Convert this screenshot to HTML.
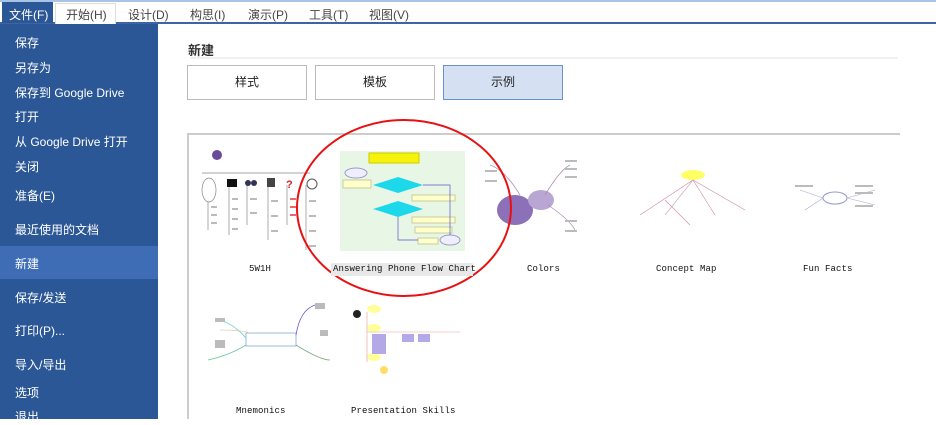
<!DOCTYPE html>
<html><head><meta charset="utf-8"><style>
*{margin:0;padding:0;box-sizing:border-box}
body{width:936px;height:419px;overflow:hidden;background:#fff;font-family:"Liberation Sans","Noto Sans CJK SC",sans-serif;position:relative}
.a{position:absolute}
.top{left:0;top:0;width:936px;height:2px;background:#a9c4e6}
.menu{left:0;top:2px;width:936px;height:22px;background:#fff;border-bottom:2px solid #3d64a6}
.mi{position:absolute;top:4px;font-size:12px;color:#444}
.side{left:0;top:24px;width:158px;height:395px;background:#2b5797}
.si{position:absolute;left:15px;font-size:12px;color:#fff}
.btn{position:absolute;top:65px;width:120px;height:35px;border:1px solid #bbb;background:#fff;font-size:12px;color:#222;text-align:center;line-height:33px}
.lbl{position:absolute;font-family:"Liberation Mono","Noto Sans CJK SC",monospace;font-size:9px;color:#111;letter-spacing:0.1px}
</style></head><body>
<div class="a top"></div>
<div class="a menu">
<div class="a" style="left:2px;top:0;width:51px;height:21px;background:#2b5797"></div>
<div class="mi" style="left:9px;color:#fff">文件(F)</div>
<div class="a" style="left:55px;top:1px;width:61px;height:21px;border:1px solid #ddd;border-bottom:none;background:#fff"></div>
<div class="mi" style="left:66px">开始(H)</div>
<div class="mi" style="left:128px">设计(D)</div>
<div class="mi" style="left:190px">构思(I)</div>
<div class="mi" style="left:248px">演示(P)</div>
<div class="mi" style="left:309px">工具(T)</div>
<div class="mi" style="left:369px">视图(V)</div>
</div>
<div class="a side">
<div class="si" style="top:10px">保存</div>
<div class="si" style="top:35px">另存为</div>
<div class="si" style="top:60px">保存到 Google Drive</div>
<div class="si" style="top:84px">打开</div>
<div class="si" style="top:109px">从 Google Drive 打开</div>
<div class="si" style="top:134px">关闭</div>
<div class="si" style="top:163px">准备(E)</div>
<div class="si" style="top:197px">最近使用的文档</div>
<div class="a" style="left:0;top:222px;width:158px;height:33px;background:#3e6db5"></div>
<div class="si" style="top:231px">新建</div>
<div class="si" style="top:265px">保存/发送</div>
<div class="si" style="top:298px">打印(P)...</div>
<div class="si" style="top:332px">导入/导出</div>
<div class="si" style="top:360px">选项</div>
<div class="si" style="top:384px">退出</div>
</div>
<div class="a" style="left:188px;top:40px;font-size:13px;color:#333;font-weight:bold">新建</div>
<div class="a" style="left:190px;top:57px;width:708px;height:2px;background:#f0f0f0"></div>
<div class="btn" style="left:187px">样式</div>
<div class="btn" style="left:315px">模板</div>
<div class="btn" style="left:443px;background:#d5e1f2;border-color:#6b90cf">示例</div>
<div class="a" style="left:187px;top:133px;width:713px;height:286px;border-top:2px solid #ccc;border-left:2px solid #ccc"></div>
<svg class="a" style="left:0;top:0" width="936" height="419">
<!-- 5W1H -->
<g stroke="#888" fill="none" stroke-width="0.7">
<line x1="202" y1="173" x2="310" y2="173"/>
<ellipse cx="209" cy="190" rx="7" ry="12"/>
<line x1="208" y1="202" x2="208" y2="230"/><line x1="229" y1="185" x2="229" y2="235"/><line x1="247" y1="185" x2="247" y2="225"/><line x1="268" y1="185" x2="268" y2="240"/><line x1="287" y1="185" x2="287" y2="225"/><line x1="306" y1="185" x2="306" y2="250"/>
</g>
<g fill="#bbb"><rect x="211" y="206" width="6" height="2"/><rect x="211" y="214" width="6" height="2"/><rect x="211" y="222" width="6" height="2"/><rect x="232" y="198" width="6" height="2"/><rect x="232" y="208" width="6" height="2"/><rect x="232" y="218" width="6" height="2"/><rect x="232" y="228" width="6" height="2"/><rect x="250" y="198" width="7" height="2"/><rect x="250" y="212" width="7" height="2"/><rect x="271" y="200" width="7" height="2"/><rect x="271" y="215" width="7" height="2"/><rect x="271" y="230" width="7" height="2"/><rect x="309" y="200" width="7" height="2"/><rect x="309" y="215" width="7" height="2"/><rect x="309" y="230" width="7" height="2"/><rect x="309" y="245" width="7" height="2"/></g>
<g fill="#e66"><rect x="290" y="198" width="6" height="2"/><rect x="290" y="206" width="6" height="2"/><rect x="290" y="214" width="6" height="2"/></g>
<circle cx="217" cy="155" r="5" fill="#6a4a9a"/><rect x="227" y="179" width="10" height="8" fill="#111"/><circle cx="248" cy="183" r="3" fill="#335"/><circle cx="254" cy="183" r="3" fill="#335"/><rect x="267" y="178" width="8" height="9" fill="#444"/><text x="286" y="188" fill="#d22" font-size="11" font-weight="bold">?</text><circle cx="312" cy="184" r="5" fill="none" stroke="#555"/>
<!-- flow -->
<rect x="340" y="138" width="127" height="122" fill="#fff"/>
<rect x="340" y="151" width="125" height="100" fill="#e8f6e6"/>
<rect x="369" y="153" width="50" height="10" fill="#f6f20a" stroke="#cc0"/>
<ellipse cx="356" cy="173" rx="11" ry="5" fill="#eef" stroke="#99c"/>
<rect x="343" y="180" width="28" height="8" fill="#ffc" stroke="#cc9"/>
<polygon points="373,185 398,177 423,185 398,193" fill="#1dd8ea"/>
<polygon points="373,209 398,201 423,209 398,217" fill="#1dd8ea"/>
<rect x="412" y="195" width="43" height="6" fill="#ffc" stroke="#cc9"/><rect x="412" y="217" width="43" height="6" fill="#ffc" stroke="#cc9"/><rect x="415" y="227" width="37" height="6" fill="#ffc" stroke="#cc9"/><rect x="418" y="238" width="20" height="6" fill="#ffc" stroke="#cc9"/>
<ellipse cx="450" cy="240" rx="10" ry="5" fill="#eef" stroke="#99c"/>
<path d="M398 217V240H418M423 185H450V235" stroke="#55c" fill="none" stroke-width="0.7"/>
<!-- colors -->
<ellipse cx="515" cy="210" rx="18" ry="15" fill="#8c70b8"/><ellipse cx="541" cy="200" rx="13" ry="10" fill="#b9a6d3"/>
<g stroke="#a8a" fill="none" stroke-width="0.7"><path d="M545 195Q560 170 570 165M548 205Q570 220 575 230M520 195Q505 170 490 165"/></g>
<g fill="#bbb"><rect x="565" y="160" width="12" height="2"/><rect x="565" y="168" width="12" height="2"/><rect x="565" y="176" width="12" height="2"/><rect x="565" y="220" width="12" height="2"/><rect x="565" y="230" width="12" height="2"/><rect x="485" y="170" width="12" height="2"/><rect x="485" y="180" width="12" height="2"/></g>
<!-- concept -->
<ellipse cx="693" cy="175" rx="12" ry="5" fill="#ff6"/>
<g stroke="#c8a" stroke-width="0.6" fill="none"><path d="M693 180L640 215M693 180L665 215M693 180L715 215M693 180L745 210M665 200L690 225"/></g>
<!-- fun facts -->
<ellipse cx="835" cy="198" rx="12" ry="6" fill="none" stroke="#99c"/>
<g stroke="#aac" stroke-width="0.6"><path d="M823 198L800 190M823 198L805 210M847 198L875 190M847 198L875 205"/></g>
<g fill="#bbb"><rect x="855" y="185" width="18" height="2"/><rect x="855" y="192" width="18" height="2"/><rect x="855" y="205" width="18" height="2"/><rect x="795" y="185" width="18" height="2"/></g>
<!-- mnemonics -->
<rect x="246" y="333" width="50" height="13" fill="#fff" stroke="#9bd"/>
<g fill="none" stroke-width="0.8"><path d="M246 338Q230 320 215 320" stroke="#6cc"/><path d="M296 335Q300 310 315 305" stroke="#75c"/><path d="M296 345Q320 360 330 360" stroke="#7a7"/><path d="M246 345Q230 355 208 360" stroke="#6c9"/><path d="M250 333Q240 330 220 330" stroke="#dca"/></g>
<g fill="#bbb"><rect x="215" y="318" width="10" height="4"/><rect x="215" y="340" width="10" height="8"/><rect x="315" y="303" width="10" height="6"/><rect x="320" y="330" width="8" height="6"/></g>
<!-- presentation -->
<circle cx="357" cy="314" r="4" fill="#222"/><ellipse cx="374" cy="309" rx="7" ry="4" fill="#ff9"/><ellipse cx="374" cy="328" rx="7" ry="4" fill="#ff9"/><ellipse cx="374" cy="357" rx="7" ry="4" fill="#ff9"/>
<line x1="367" y1="312" x2="367" y2="362" stroke="#e99" stroke-width="0.6"/><line x1="367" y1="332" x2="460" y2="332" stroke="#e99" stroke-width="0.6"/>
<rect x="372" y="334" width="14" height="20" fill="#b4a8e6"/><rect x="402" y="334" width="12" height="8" fill="#b4a8e6"/><rect x="418" y="334" width="12" height="8" fill="#b4a8e6"/><circle cx="384" cy="370" r="4" fill="#fd6"/>
<ellipse cx="404" cy="208" rx="107" ry="88" fill="none" stroke="#e81010" stroke-width="2"/>
</svg>
<div class="lbl" style="left:249px;top:264px">5W1H</div>
<div class="a" style="left:331px;top:263px;width:142px;height:13px;background:#e8e8e8"></div>
<div class="lbl" style="left:333px;top:264px">Answering Phone Flow Chart</div>
<div class="lbl" style="left:527px;top:264px">Colors</div>
<div class="lbl" style="left:656px;top:264px">Concept Map</div>
<div class="lbl" style="left:803px;top:264px">Fun Facts</div>
<div class="lbl" style="left:236px;top:406px">Mnemonics</div>
<div class="lbl" style="left:351px;top:406px">Presentation Skills</div>
</body></html>
